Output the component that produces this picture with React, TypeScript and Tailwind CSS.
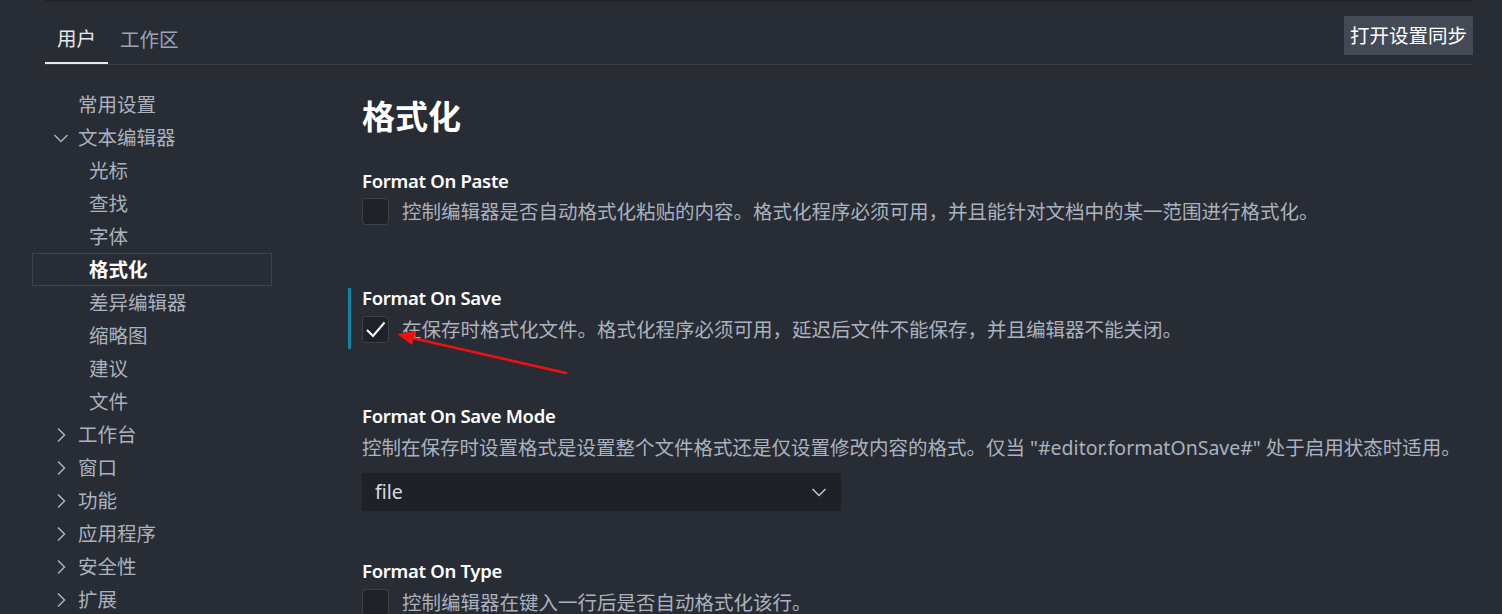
import React from "react";

const F = { fontFamily: '"Noto Sans", "Noto Sans CJK SC", sans-serif' };

function Chevron({ down }: { down?: boolean }) {
  return (
    <svg width="16" height="16" viewBox="0 0 16 16" className="shrink-0">
      {down ? (
        <path d="M1.5 5 L8 11.5 L14.5 5" fill="none" stroke="#abb2bf" strokeWidth="1.5" />
      ) : (
        <path d="M5 1.5 L11.5 8 L5 14.5" fill="none" stroke="#abb2bf" strokeWidth="1.5" />
      )}
    </svg>
  );
}

type Row = { label: string; level: 0 | 1; chevron?: "down" | "right"; selected?: boolean };

const rows: Row[] = [
  { label: "常用设置", level: 0 },
  { label: "文本编辑器", level: 0, chevron: "down" },
  { label: "光标", level: 1 },
  { label: "查找", level: 1 },
  { label: "字体", level: 1 },
  { label: "格式化", level: 1, selected: true },
  { label: "差异编辑器", level: 1 },
  { label: "缩略图", level: 1 },
  { label: "建议", level: 1 },
  { label: "文件", level: 1 },
  { label: "工作台", level: 0, chevron: "right" },
  { label: "窗口", level: 0, chevron: "right" },
  { label: "功能", level: 0, chevron: "right" },
  { label: "应用程序", level: 0, chevron: "right" },
  { label: "安全性", level: 0, chevron: "right" },
  { label: "扩展", level: 0, chevron: "right" },
];

function Checkbox({ checked }: { checked?: boolean }) {
  return (
    <div className="w-[27px] h-[27px] shrink-0 rounded-[4px] bg-[#1f2229] border border-[#3c414c] flex items-center justify-center">
      {checked && (
        <svg width="25" height="25" viewBox="0 0 25 25">
          <path d="M4 13 L10 19 L21.5 5.5" fill="none" stroke="#ffffff" strokeWidth="2" />
        </svg>
      )}
    </div>
  );
}

const H = "text-[18.5px] tracking-[-0.3px] leading-[27px] font-semibold text-white";

export default function App() {
  return (
    <div
      className="relative w-[1502px] h-[614px] overflow-hidden bg-[#282c34] text-[#abb2bf]"
      style={F}
    >
      {/* header */}
      <div className="ml-[45px] w-[1428px] border-t-2 border-[#21252b]">
        <div className="flex items-start justify-between h-[63px] border-b border-[#3b3d40]">
          <div className="flex h-full">
            <div className="h-full px-[12px] flex items-center text-[19.5px] text-[#e8e8e8] border-b-2 border-[#e8e8e8] pt-[14px]">
              用户
            </div>
            <div className="h-full px-[12px] flex items-center text-[19.5px] text-[#9da5b4] pt-[14px]">
              工作区
            </div>
          </div>
          <div className="mt-[14px] h-[39px] px-[6px] flex items-center bg-[#434a56] text-white text-[19.5px]">
            打开设置同步
          </div>
        </div>
      </div>

      <div className="flex">
        {/* sidebar */}
        <div className="w-[348px] shrink-0 pt-[23px]">
          {rows.map((r, i) => (
            <div
              key={i}
              className={
                "ml-[32px] w-[240px] h-[33px] flex items-center border " +
                (r.selected ? "border-[#3e4451]" : "border-transparent")
              }
            >
              {r.level === 0 ? (
                <div className="flex items-center">
                  <div className="w-[45px] flex justify-end pr-[9px]">
                    {r.chevron ? <Chevron down={r.chevron === "down"} /> : null}
                  </div>
                  <span className="text-[19.5px] leading-none">{r.label}</span>
                </div>
              ) : (
                <span
                  className={
                    "pl-[56px] text-[19.5px] leading-none " +
                    (r.selected ? "font-bold text-white" : "")
                  }
                >
                  {r.label}
                </span>
              )}
            </div>
          ))}
        </div>

        {/* main */}
        <div className="pl-[14px] pt-[32px] flex-1">
          <div className="text-[33px] leading-[40px] font-bold text-white">格式化</div>

          {/* Format On Paste */}
          <div className="mt-[30px]">
            <div className={H}>Format On Paste</div>
            <div className="mt-[4px] flex items-center gap-[13px]">
              <Checkbox />
              <span className="text-[19.5px] leading-[27px]">
                控制编辑器是否自动格式化粘贴的内容。格式化程序必须可用，并且能针对文档中的某一范围进行格式化。
              </span>
            </div>
          </div>

          {/* Format On Save */}
          <div className="relative mt-[59px]">
            <div className="absolute left-[-14px] top-[4px] w-[3px] h-[61px] bg-[#0e85a8]" />
            <div className={H}>Format On Save</div>
            <div className="mt-[5px] flex items-center gap-[13px]">
              <Checkbox checked />
              <span className="text-[19.5px] leading-[27px]">
                在保存时格式化文件。格式化程序必须可用，延迟后文件不能保存，并且编辑器不能关闭。
              </span>
            </div>
          </div>

          {/* Format On Save Mode */}
          <div className="mt-[59px]">
            <div className={H}>Format On Save Mode</div>
            <div className="mt-[5px] text-[19.5px] leading-[27px]">
              控制在保存时设置格式是设置整个文件格式还是仅设置修改内容的格式。仅当 "#editor.formatOnSave#" 处于启用状态时适用。
            </div>
            <div className="mt-[12px] w-[479px] h-[38px] bg-[#1e2128] flex items-center justify-between pl-[13px] pr-[13px]">
              <span className="text-[19.5px] text-[#d7dae0]">file</span>
              <svg width="18" height="18" viewBox="0 0 18 18">
                <path d="M2.5 6 L9 12.5 L15.5 6" fill="none" stroke="#c8ccd4" strokeWidth="1.4" />
              </svg>
            </div>
          </div>

          {/* Format On Type */}
          <div className="mt-[46px]">
            <div className={H}>Format On Type</div>
            <div className="mt-[5px] flex items-center gap-[13px]">
              <Checkbox />
              <span className="text-[19.5px] leading-[27px]">控制编辑器在键入一行后是否自动格式化该行。</span>
            </div>
          </div>
        </div>
      </div>

      {/* red annotation arrow */}
      <svg className="absolute left-0 top-0 pointer-events-none" width="1502" height="614">
        <line x1="412" y1="338" x2="566" y2="373" stroke="#f01010" strokeWidth="2.6" strokeLinecap="round" />
        <polygon points="397,334 416,331 412,345" fill="#f01010" />
      </svg>
    </div>
  );
}
